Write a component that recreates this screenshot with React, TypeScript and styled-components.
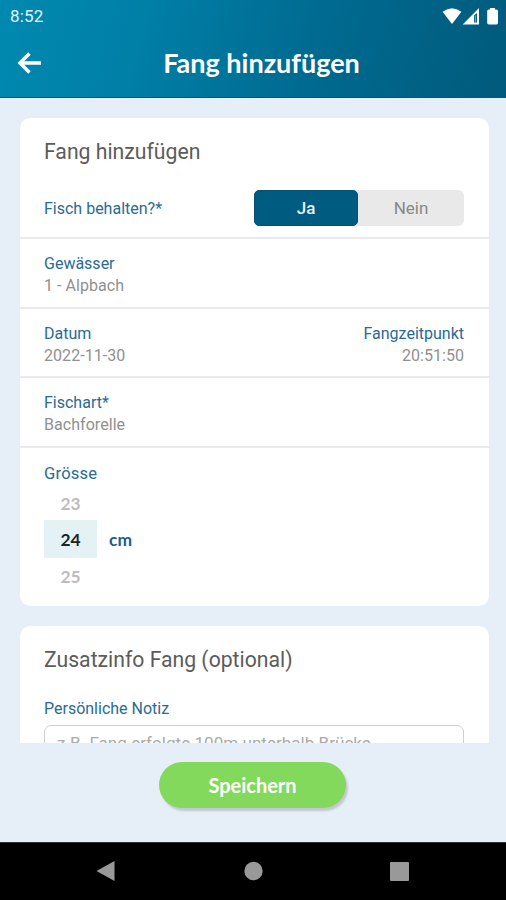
import React, { useState } from 'react';
import styled, { createGlobalStyle } from 'styled-components';

const GlobalStyle = createGlobalStyle`
  *, *::before, *::after { box-sizing: border-box; }
  body { margin: 0; background: #e6eef8; }
  button { border: 0; padding: 0; background: none; font: inherit; cursor: pointer; }
`;

const Screen = styled.div`
  width: 506px;
  height: 900px;
  display: flex;
  flex-direction: column;
  overflow: hidden;
  background: #e6eef8;
  font-family: Roboto, sans-serif;
`;

const Header = styled.header`
  flex: none;
  height: 98px;
  background: linear-gradient(105deg, #0089b0 0%, #007fa7 28%, #006a90 62%, #005a7c 100%);
  border-bottom: 1px solid #0a5280;
  color: #fff;
`;

const StatusBar = styled.div`
  height: 32px;
  padding: 0 7px 0 10px;
  display: flex;
  align-items: center;
  justify-content: space-between;
`;

const Clock = styled.span`
  font-size: 17px;
  line-height: 32px;
  letter-spacing: 0.2px;
  color: #e4f2f8;
`;

const StatusIcons = styled.svg`
  width: 57px;
  height: 18px;
`;

const TitleBar = styled.div`
  height: 62px;
  display: grid;
  grid-template-columns: 60px 1fr 60px;
  align-items: center;
`;

const BackButton = styled.button`
  display: flex;
  padding-left: 17px;
`;

const Title = styled.h1`
  margin: 0;
  padding-left: 17px;
  text-align: center;
  font: 700 27px/32px Lato, sans-serif;
  white-space: nowrap;
`;

const Content = styled.main`
  flex: none;
  height: 645px;
  padding: 20px 17px 0 20px;
  display: flex;
  flex-direction: column;
  gap: 20px;
  overflow: hidden;
`;

const Card = styled.section`
  flex: none;
  width: 469px;
  border-radius: 10px;
  background: #fff;
`;

const CardTitle = styled.h2`
  margin: 0;
  padding: 20px 24px 0;
  font-size: 21.2px;
  line-height: 28px;
  font-weight: 400;
  color: #5c5c5c;
`;

const Row = styled.div<{ $height: number; $top?: number }>`
  height: ${(p) => p.$height}px;
  padding: ${(p) => p.$top ?? 0}px 25px 0 24px;
  display: flex;
  justify-content: space-between;
  border-bottom: 2px solid #eaeaea;
`;

const ToggleRow = styled(Row)`
  align-items: flex-start;
`;

const Field = styled.div<{ $end?: boolean }>`
  display: flex;
  flex-direction: column;
  align-items: ${(p) => (p.$end ? 'flex-end' : 'flex-start')};
`;

const Label = styled.span`
  font-size: 16px;
  line-height: 22px;
  color: #2a6a94;
`;

const ToggleLabel = styled(Label)`
  margin-top: 8px;
`;

const SizeLabel = styled(Label)`
  font-size: 16.6px;
  letter-spacing: 0.2px;
`;

const Value = styled.span`
  font-size: 16px;
  line-height: 22px;
  letter-spacing: 0.05px;
  color: #909090;
`;

const Segmented = styled.div`
  width: 210px;
  height: 36px;
  display: grid;
  grid-template-columns: 104px 1fr;
  grid-template-rows: 36px;
  border-radius: 6px;
  background: #e9e9e9;
`;

const Segment = styled.button<{ $active: boolean }>`
  border-radius: 5px;
  border: 1px solid ${(p) => (p.$active ? '#07506f' : 'transparent')};
  background: ${(p) => (p.$active ? '#005b80' : 'transparent')};
  color: ${(p) => (p.$active ? '#e6f1f7' : '#888')};
  font-size: 17px;
  line-height: 34px;
  font-weight: ${(p) => (p.$active ? 500 : 400)};
`;

const SizeSection = styled.div`
  height: 158px;
  padding: 15px 24px 0;
`;

const Picker = styled.div`
  display: grid;
  grid-template-columns: 53px auto;
  grid-template-rows: 35px 38px 36px;
  column-gap: 12px;
  justify-content: start;
  align-items: center;
  font: 700 17.4px/22px Lato, sans-serif;
`;

const PickerValue = styled.span<{ $selected?: boolean }>`
  grid-column: 1;
  height: 100%;
  padding-top: 2px;
  display: flex;
  align-items: center;
  justify-content: center;
  background: ${(p) => (p.$selected ? '#e4f2f6' : 'transparent')};
  color: ${(p) => (p.$selected ? '#202426' : '#bdbdbd')};
`;

const Unit = styled.span`
  padding-top: 2px;
  color: #1d5c8c;
`;

const NoteLabel = styled(Label)`
  display: block;
  margin: 24px 24px 5px;
`;

const NoteBox = styled.div`
  height: 90px;
  margin: 0 25px 24px 24px;
  padding: 6px 12px;
  border: 1px solid #cfcfcf;
  border-radius: 7px;
  font-size: 17.1px;
  line-height: 22px;
  color: #aaa;
`;

const Footer = styled.footer`
  flex: none;
  height: 99px;
  padding: 19px 0 0 159px;
`;

const SaveButton = styled.button`
  display: block;
  width: 187px;
  height: 46px;
  border-radius: 23px;
  background: #82d95b;
  box-shadow: 2px 3px 2px #c3c7d0;
  color: #fff;
  font: 700 20px/46px Lato, sans-serif;
`;

const SystemNav = styled.nav`
  flex: none;
  height: 58px;
  background: #000;
  border-top: 1px solid #333;
`;

const NavIcons = styled.svg`
  display: block;
  width: 506px;
  height: 57px;
  fill: #999;
`;

export default function App() {
  const [keep, setKeep] = useState(true);
  return (
    <>
      <GlobalStyle />
      <Screen>
        <Header>
          <StatusBar>
            <Clock>8:52</Clock>
            <StatusIcons viewBox="442 6 57 18" fill="#fff">
              <path d="M442.6 10.8 Q452 3.7 461.4 10.8 L452 23 Z" />
              <path fillRule="evenodd" d="M479 7 V23.4 H462.7 Z M474 14.5 V21.5 H477 V12 Z" />
              <path d="M474.7 14.5 H476.1 V21.5 H474.7 Z" fillOpacity=".4" />
              <path d="M490 7 H495 V8.5 H496.5 Q498 8.5 498 10 V22 Q498 23.4 496.5 23.4 H488.7 Q487.2 23.4 487.2 22 V10 Q487.2 8.5 488.7 8.5 H490 Z" />
            </StatusIcons>
          </StatusBar>
          <TitleBar>
            <BackButton aria-label="Zurück">
              <svg width="25" height="22" viewBox="0 0 25 22" fill="none" stroke="#fff" strokeWidth="3.4">
                <path d="M24 11 H3 M12.5 1.5 L3 11 L12.5 20.5" />
              </svg>
            </BackButton>
            <Title>Fang hinzufügen</Title>
          </TitleBar>
        </Header>

        <Content>
          <Card>
            <CardTitle>Fang hinzufügen</CardTitle>
            <ToggleRow $height={73} $top={24}>
              <ToggleLabel>Fisch behalten?*</ToggleLabel>
              <Segmented>
                <Segment $active={keep} onClick={() => setKeep(true)}>Ja</Segment>
                <Segment $active={!keep} onClick={() => setKeep(false)}>Nein</Segment>
              </Segmented>
            </ToggleRow>
            <Row $height={70} $top={14}>
              <Field>
                <Label>Gewässer</Label>
                <Value>1 - Alpbach</Value>
              </Field>
            </Row>
            <Row $height={69} $top={14}>
              <Field>
                <Label>Datum</Label>
                <Value>2022-11-30</Value>
              </Field>
              <Field $end>
                <Label>Fangzeitpunkt</Label>
                <Value>20:51:50</Value>
              </Field>
            </Row>
            <Row $height={70} $top={14}>
              <Field>
                <Label>Fischart*</Label>
                <Value>Bachforelle</Value>
              </Field>
            </Row>
            <SizeSection>
              <SizeLabel>Grösse</SizeLabel>
              <Picker>
                <PickerValue>23</PickerValue>
                <PickerValue $selected>24</PickerValue>
                <Unit>cm</Unit>
                <PickerValue>25</PickerValue>
              </Picker>
            </SizeSection>
          </Card>

          <Card>
            <CardTitle>Zusatzinfo Fang (optional)</CardTitle>
            <NoteLabel>Persönliche Notiz</NoteLabel>
            <NoteBox>z.B. Fang erfolgte 100m unterhalb Brücke</NoteBox>
          </Card>
        </Content>

        <Footer>
          <SaveButton>Speichern</SaveButton>
        </Footer>

        <SystemNav>
          <NavIcons viewBox="0 843 506 57">
            <path d="M96.5 871 L114.5 861 V881 Z" />
            <circle cx="253.5" cy="871" r="9.2" />
            <rect x="390" y="862" width="19" height="19" rx="1" />
          </NavIcons>
        </SystemNav>
      </Screen>
    </>
  );
}
